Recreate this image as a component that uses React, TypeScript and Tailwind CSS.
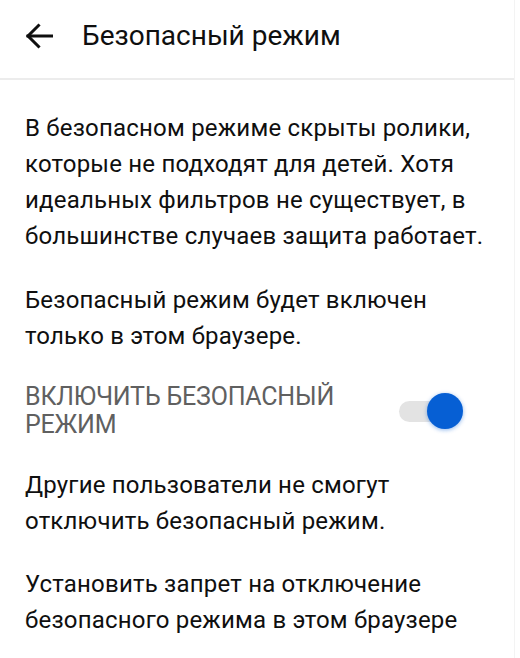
import { useState } from "react";

export default function App() {
  const [enabled, setEnabled] = useState(true);

  return (
    <div className="min-h-[658px] w-[515px] border-r border-[#f3f3f3] bg-white text-[#0f0f0f] font-['Roboto','Liberation_Sans',sans-serif]">
      {/* шапка */}
      <header className="flex h-[80px] items-center border-b-2 border-[#ececec] px-[25px] pb-[6px]">
        <button className="flex h-[28px] w-[28px] items-center justify-center" aria-label="Назад">
          <svg width="28" height="28" viewBox="0 0 28 28" fill="none" stroke="#0f0f0f" strokeWidth="3" strokeLinecap="square">
            <path d="M27 14H3" />
            <path d="M13.5 3.5L3 14l10.5 10.5" />
          </svg>
        </button>
        <h1 className="ml-[29px] text-[28px] leading-[34px] font-normal">Безопасный режим</h1>
      </header>

      {/* содержимое */}
      <div className="pl-[25px] pr-[10px] pt-[30px] text-[24px] leading-[36px] tracking-[0.2px]">
        <p>
          В безопасном режиме скрыты ролики,
          <br />
          которые не подходят для детей. Хотя
          <br />
          идеальных фильтров не существует, в
          <br />
          большинстве случаев защита работает.
        </p>
        <p className="mt-[28px]">
          Безопасный режим будет включен
          <br />
          только в этом браузере.
        </p>

        <div className="mt-[29px] flex items-center">
          <span className="w-[372px] text-[25px] leading-[28px] tracking-[-0.2px] uppercase text-[#606060]">
            Включить безопасный режим
          </span>
          <button
            onClick={() => setEnabled((v) => !v)}
            className="relative h-[36px] w-[66px]"
            aria-label="Включить безопасный режим"
          >
            <span className="absolute left-[2px] top-[8px] h-[21px] w-[60px] rounded-full bg-[#e3e3e3]" />
            <span
              className={`absolute top-0 h-[36px] w-[36px] rounded-full shadow-[0_1px_4px_rgba(6,95,212,0.45)] ${
                enabled ? "left-[30px] bg-[#065fd4]" : "left-0 bg-[#f1f1f1]"
              }`}
            />
          </button>
        </div>

        <p className="mt-[28px]">
          Другие пользователи не смогут
          <br />
          отключить безопасный режим.
        </p>
        <p className="mt-[27px]">
          Установить запрет на отключение
          <br />
          безопасного режима в этом браузере
        </p>
      </div>
    </div>
  );
}
